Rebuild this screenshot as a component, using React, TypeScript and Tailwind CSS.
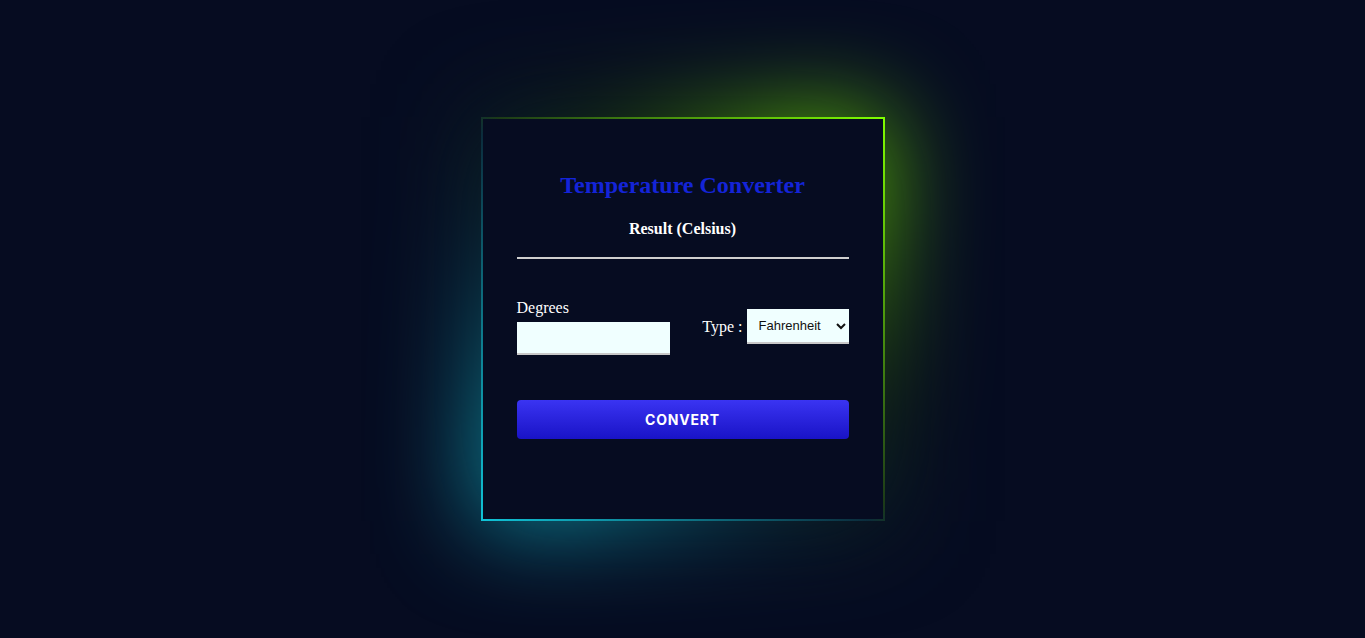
import React, { useState } from 'react';

const App: React.FC = () => {
  const [degrees, setDegrees] = useState('');
  const [type, setType] = useState('Fahrenheit');
  const [result, setResult] = useState<string | null>(null);

  const handleConvert = () => {
    const value = parseFloat(degrees);
    if (isNaN(value)) return;
    const c = type === 'Fahrenheit' ? ((value - 32) * 5) / 9 : value - 273.15;
    setResult(c.toFixed(2));
  };

  return (
    <div className="min-h-screen w-full bg-[#060c21] flex items-center justify-center">
      <div className="relative w-[404px] h-[404px]">
        {/* glow behind the card */}
        <div className="absolute inset-0 bg-[linear-gradient(45deg,#10c4d8,#0a2a36_40%,#12260f_60%,#80ff00)] blur-[50px]" />
        {/* border */}
        <div className="relative h-full w-full p-[2px] bg-[linear-gradient(45deg,#10c4d8,#0b2c3c_48%,#1c3a18_52%,#80ff00)]">
          <div className="h-full w-full bg-[#060c21] px-[34px] pt-[51px] font-['Liberation_Serif',serif]">
            <h1 className="text-center text-[24px] font-bold text-[#1424d8] leading-[30px]">
              Temperature Converter
            </h1>
            <h3 className="mt-[19px] text-center text-[16px] font-bold text-white leading-[20px]">
              {result !== null ? `${result} (Celsius)` : 'Result (Celsius)'}
            </h3>
            <div className="mt-[18px] h-[2px] bg-[#cfcfcf]" />

            <div className="mt-[39px] flex items-start justify-between">
              <div className="flex flex-col">
                <label className="text-[16px] text-white leading-[20px]">Degrees</label>
                <input
                  type="text"
                  value={degrees}
                  onChange={(e) => setDegrees(e.target.value)}
                  className="mt-[4px] w-[153px] h-[33px] bg-[#f0ffff] border-b-2 border-[#c8c8c8] outline-none px-2 text-black"
                />
              </div>
              <div className="mt-[11px] flex items-center">
                <span className="text-[16px] text-white mr-[4px]">Type :</span>
                <select
                  value={type}
                  onChange={(e) => setType(e.target.value)}
                  className="w-[102px] h-[35px] bg-[#f0ffff] border-b-2 border-[#c8c8c8] pl-[8px] pr-1 text-[13px] text-[#111] font-['Liberation_Sans',sans-serif] outline-none"
                >
                  <option>Fahrenheit</option>
                  <option>Kelvin</option>
                </select>
              </div>
            </div>

            <button
              onClick={handleConvert}
              className="mt-[45px] w-full h-[39px] rounded-[4px] bg-[linear-gradient(180deg,#3a34f2,#1913c6)] text-white text-[14px] font-bold tracking-[0.8px] font-['Inter',sans-serif]"
            >
              CONVERT
            </button>
          </div>
        </div>
      </div>
    </div>
  );
};

export default App;
